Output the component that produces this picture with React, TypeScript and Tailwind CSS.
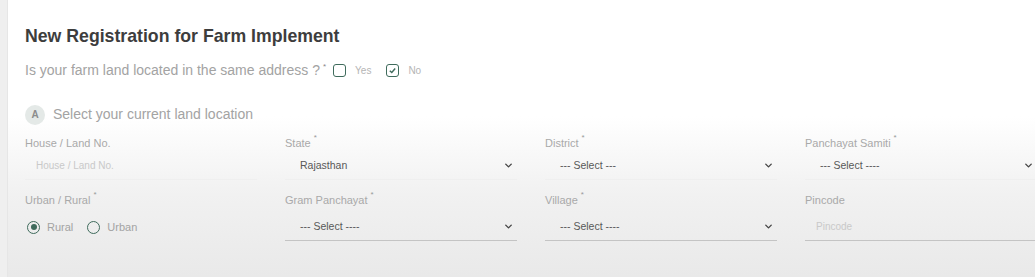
import { ChevronDown } from "lucide-react";

const font = { fontFamily: '"Liberation Sans", Arial, sans-serif' };

function Label({ text, req }: { text: string; req?: boolean }) {
  return (
    <div className="flex h-[18px] items-start text-[11px] leading-[18px] text-[#a9a9a9]">
      <span>{text}</span>
      {req && <span className="ml-[3px] -mt-[5px] text-[8px] text-[#999]">*</span>}
    </div>
  );
}

function SelectBox({ value, line, top }: { value: string; line: string; top: string }) {
  return (
    <div className={`flex h-[28px] items-center justify-between border-b pl-[15px] pr-[3px] ${line} ${top}`}>
      <span className="text-[10.5px] text-[#585858]">{value}</span>
      <ChevronDown className="h-[11px] w-[11px] text-[#444]" strokeWidth={3} />
    </div>
  );
}

function TextBox({ placeholder, line, top }: { placeholder: string; line: string; top: string }) {
  return (
    <div className={`flex h-[28px] items-center border-b pl-[11px] ${line} ${top}`}>
      <span className="text-[10px] text-[#c9c9c9]">{placeholder}</span>
    </div>
  );
}

function Check({ checked }: { checked?: boolean }) {
  return (
    <span className="flex h-[13px] w-[13px] items-center justify-center rounded-[3px] border-[1.6px] border-[#3f6b5c]">
      {checked && (
        <svg viewBox="0 0 10 10" className="h-[9px] w-[9px]">
          <path d="M2 5.2 L4.2 7.2 L8 2.8" fill="none" stroke="#3f6b5c" strokeWidth="1.6" />
        </svg>
      )}
    </span>
  );
}

function Radio({ checked }: { checked?: boolean }) {
  return (
    <span className="flex h-[13px] w-[13px] items-center justify-center rounded-full border-[1.6px] border-[#3f6b5c]">
      {checked && <span className="h-[6px] w-[6px] rounded-full bg-[#3f6b5c]" />}
    </span>
  );
}

export default function App() {
  const row1 = "border-[#efefef]";
  const row2 = "border-[#c4c4c4]";
  return (
    <div
      className="flex h-[277px] w-[1035px] overflow-hidden bg-[linear-gradient(to_bottom,#ffffff_0%,#ffffff_42%,#f1f1f1_70%,#e9e9e9_100%)]"
      style={font}
    >
      <div className="w-[8px] shrink-0 border-r border-[#e6e6e6] bg-[#efefef]" />
      <div className="flex min-w-0 flex-1 flex-col pl-[17px] pt-[25px]">
        <h1 className="text-[17.7px] font-bold leading-[22px] text-[#3d3d3d]">New Registration for Farm Implement</h1>

        <div className="mt-[13px] flex items-center text-[14px] text-[#a3a3a3]">
          <span>Is your farm land located in the same address ?</span>
          <span className="ml-[3px] -mt-[8px] text-[8px] text-[#888]">*</span>
          <span className="ml-[7px]"><Check /></span>
          <span className="ml-[9px] text-[10px] text-[#b5b5b5]">Yes</span>
          <span className="ml-[15px]"><Check checked /></span>
          <span className="ml-[9px] text-[10px] text-[#b5b5b5]">No</span>
        </div>

        <div className="mt-[23px] flex items-center">
          <span className="flex h-[20px] w-[20px] items-center justify-center rounded-full bg-[#e4e9e7] text-[10px] font-bold text-[#8c8c8c]">A</span>
          <span className="ml-[8px] text-[14px] text-[#a3a3a3]">Select your current land location</span>
        </div>

        <div className="mt-[9px] grid w-[1012px] grid-cols-4 gap-x-[28px]">
          <div>
            <Label text="House / Land No." />
            <TextBox placeholder="House / Land No." line={row1} top="mt-0" />
          </div>
          <div>
            <Label text="State" req />
            <SelectBox value="Rajasthan" line={row1} top="mt-0" />
          </div>
          <div>
            <Label text="District" req />
            <SelectBox value="--- Select ---" line={row1} top="mt-0" />
          </div>
          <div>
            <Label text="Panchayat Samiti" req />
            <SelectBox value="--- Select ----" line={row1} top="mt-0" />
          </div>

          <div className="mt-[11px]">
            <Label text="Urban / Rural" req />
            <div className="mt-[4px] flex h-[28px] items-center pl-[2px] text-[11px] text-[#a3a3a3]">
              <Radio checked />
              <span className="ml-[7px]">Rural</span>
              <span className="ml-[14px]"><Radio /></span>
              <span className="ml-[7px]">Urban</span>
            </div>
          </div>
          <div className="mt-[11px]">
            <Label text="Gram Panchayat" req />
            <SelectBox value="--- Select ----" line={row2} top="mt-[4px]" />
          </div>
          <div className="mt-[11px]">
            <Label text="Village" req />
            <SelectBox value="--- Select ----" line={row2} top="mt-[4px]" />
          </div>
          <div className="mt-[11px]">
            <Label text="Pincode" />
            <TextBox placeholder="Pincode" line={row2} top="mt-[4px]" />
          </div>
        </div>
      </div>
    </div>
  );
}
